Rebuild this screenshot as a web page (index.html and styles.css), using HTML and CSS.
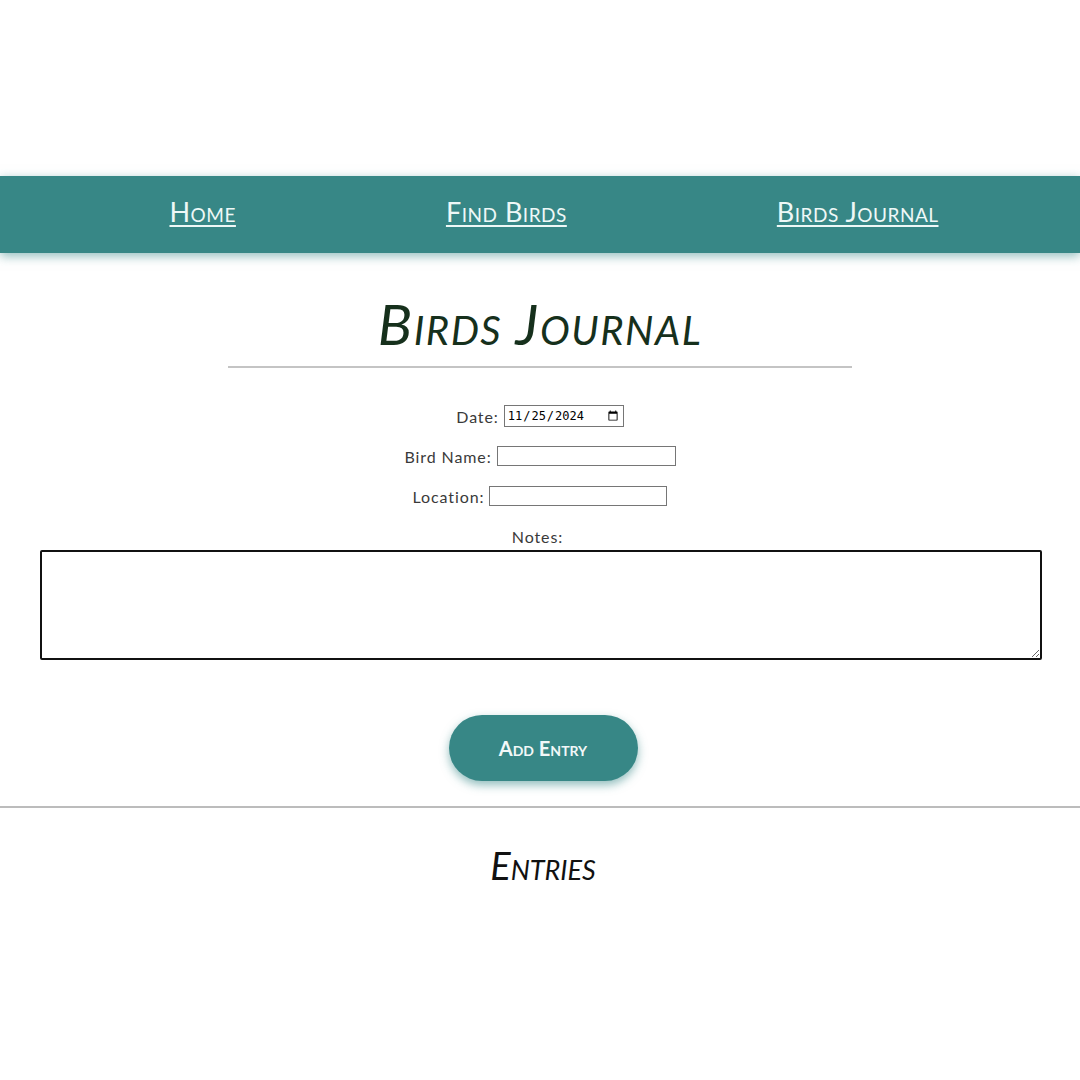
FILE: index.html
```html
<!DOCTYPE html>
<html lang="en">
<head>
<meta charset="utf-8">
<title>Birds Journal</title>
<link rel="stylesheet" href="styles.css">
</head>
<body>
<nav class="nav">
  <a class="nav-link" href="#">Home</a>
  <a class="nav-link" href="#">Find Birds</a>
  <a class="nav-link" href="#">Birds Journal</a>
</nav>
<main class="main">
  <h1 class="title">Birds Journal</h1>
  <hr class="title-rule">
  <form class="form">
    <div class="row"><label class="label" for="date">Date:</label> <input class="date" id="date" type="date" value="2024-11-25"></div>
    <div class="row"><label class="label" for="bird">Bird Name:</label> <input class="text bird" id="bird" type="text"></div>
    <div class="row"><label class="label" for="loc">Location:</label> <input class="text loc" id="loc" type="text"></div>
    <div class="row"><label class="label" for="notes">Notes:</label></div>
    <textarea class="notes" id="notes"></textarea>
    <div class="btn-row"><button class="btn" type="button">Add Entry</button></div>
  </form>
</main>
<hr class="section-rule">
<section class="entries">
  <h2 class="entries-title">Entries</h2>
</section>
</body>
</html>
```
FILE: styles.css
```css
html, body {
  margin: 0;
  padding: 0;
  background: #ffffff;
}
body {
  font-family: "Lato", "Noto Sans", sans-serif;
  color: #333;
}
.nav {
  margin-top: 176px;
  height: 77px;
  background: #378786;
  box-shadow: 0 3px 10px rgba(55, 135, 134, 0.55);
  display: flex;
  align-items: center;
  justify-content: center;
  gap: 210px;
  padding-left: 28px;
  box-sizing: border-box;
}
.nav-link {
  color: #eef8f7;
  font-family: "Lato", sans-serif;
  font-variant: small-caps;
  font-size: 27px;
  letter-spacing: 0.5px;
  text-decoration: underline;
  text-decoration-thickness: 2px;
  text-underline-offset: 3px;
  margin-top: -6px;
}
.main {
  display: flex;
  flex-direction: column;
  align-items: center;
}
.title {
  margin: 38px 0 0;
  font-family: "Lato", sans-serif;
  font-style: italic;
  font-weight: 400;
  font-variant: small-caps;
  font-size: 57px;
  line-height: 64px;
  color: #16301c;
  letter-spacing: 1.5px;
}
.title-rule {
  width: 624px;
  margin: 11px 0 0;
  border: 0;
  border-top: 2px solid #c4c4c4;
}
.form {
  width: 100%;
  display: flex;
  flex-direction: column;
  align-items: center;
  margin-top: 28px;
}
.row {
  height: 40px;
  display: flex;
  align-items: center;
  justify-content: center;
  font-size: 16px;
  color: #3a3a3a;
  letter-spacing: 0.9px;
}
.label {
  margin-right: 5px;
}
.date {
  font-family: "DejaVu Sans Mono", monospace;
  font-size: 12px;
  letter-spacing: 0;
  width: 120px;
  height: 22px;
  box-sizing: border-box;
  border: 1px solid #767676;
  padding: 0 2px;
}
.text {
  height: 20px;
  box-sizing: border-box;
  border: 1px solid #767676;
  padding: 0 2px;
}
.bird { width: 179px; }
.loc { width: 178px; }
.notes {
  display: block;
  width: 1002px;
  height: 110px;
  box-sizing: border-box;
  border: 2px solid #111;
  border-radius: 2px;
  margin: -6px 0 0 2px;
  resize: vertical;
  font-family: "Lato", sans-serif;
  outline: none;
}
.btn-row {
  margin-top: 55px;
  margin-left: 6px;
}
.btn {
  width: 189px;
  height: 66px;
  border: 0;
  border-radius: 33px;
  background: #378786;
  color: #f2f8f8;
  font-family: "Lato", sans-serif;
  font-weight: 700;
  font-variant: small-caps;
  font-size: 20px;
  box-shadow: 0 4px 10px rgba(55, 135, 134, 0.55);
}
.section-rule {
  margin: 25px 0 0;
  border: 0;
  border-top: 2px solid #bcbcbc;
}
.entries {
  text-align: center;
}
.entries-title {
  margin: 34px 0 0;
  font-family: "Lato", sans-serif;
  font-style: italic;
  font-weight: 400;
  font-variant: small-caps;
  font-size: 38px;
  color: #111;
  margin-left: 6px;
}
```
